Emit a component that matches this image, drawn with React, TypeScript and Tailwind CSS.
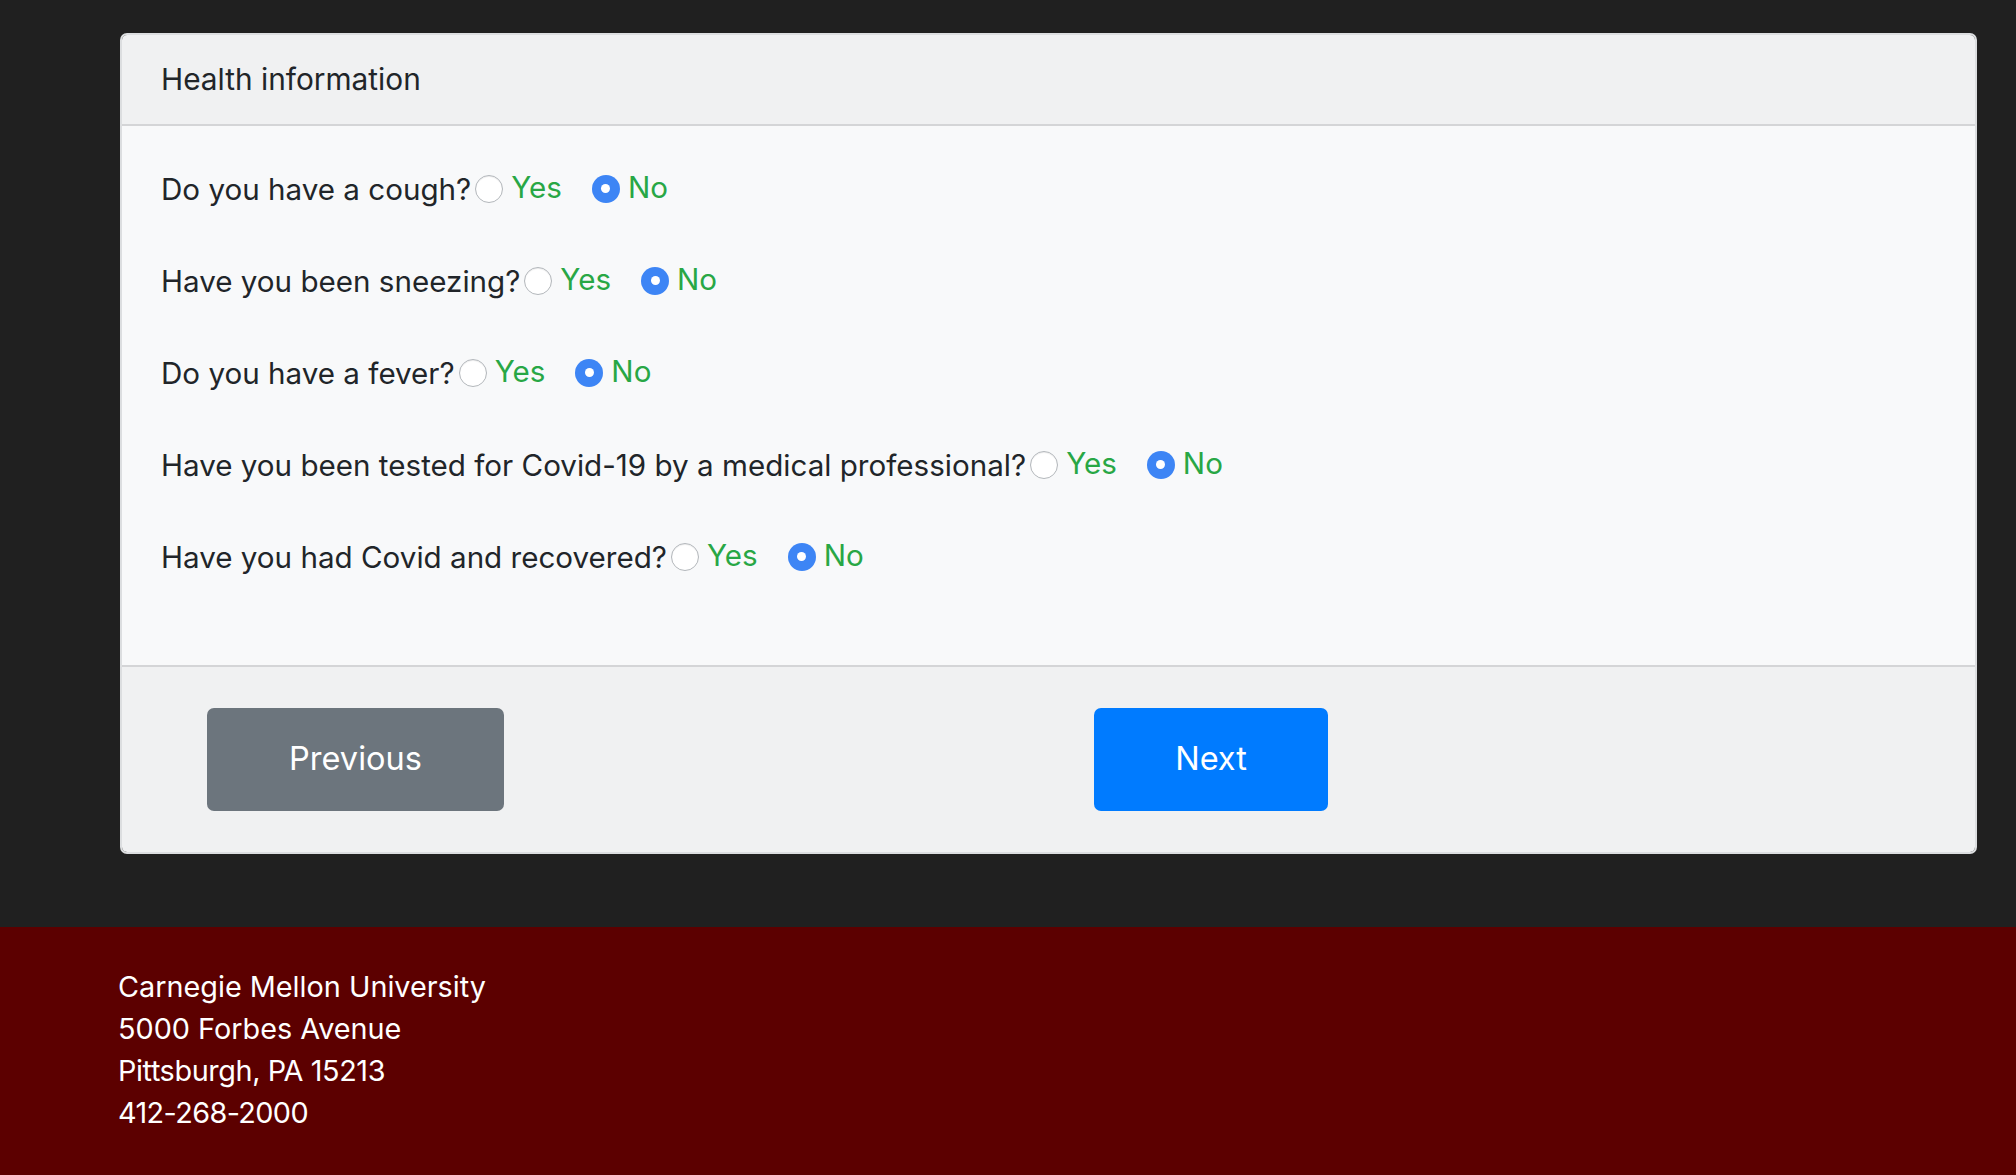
import React from "react";

const questions = [
  "Do you have a cough?",
  "Have you been sneezing?",
  "Do you have a fever?",
  "Have you been tested for Covid-19 by a medical professional?",
  "Have you had Covid and recovered?",
];

function Radio({ checked }: { checked: boolean }) {
  if (checked) {
    return (
      <span className="w-[28px] h-[28px] rounded-full bg-[#3d85f5] flex items-center justify-center shrink-0">
        <span className="w-[9px] h-[9px] rounded-full bg-white" />
      </span>
    );
  }
  return (
    <span className="w-[28px] h-[28px] rounded-full bg-white border-[1.5px] border-[#b3b7bb] shadow-[inset_0_1px_1px_rgba(0,0,0,0.08)] shrink-0" />
  );
}

export default function App() {
  return (
    <div
      className="min-h-screen flex flex-col bg-[#202020] text-[28.8px]"
      style={{ fontFamily: "Inter, 'Noto Sans', sans-serif" }}
    >
      <div className="pl-[120px] pr-[39px] pt-[33px] pb-[73px]">
        <div className="rounded-[7px] border-2 border-[#dcdee0] overflow-hidden">
          <div className="h-[91px] bg-[#f0f1f2] border-b-2 border-[#d4d5d7] flex items-center pl-[39px] text-[#212529] text-[29.8px]">
            Health information
          </div>
          <div className="h-[539px] bg-[#f8f9fa] pt-[17px] pl-[39px] text-[#212529] text-[29.6px]">
            {questions.map((q) => (
              <div key={q} className="h-[92px] flex items-center">
                <span>{q}</span>
                <span className="ml-[4px] flex items-center">
                  <Radio checked={false} />
                  <span className="ml-[8px] text-[#28a745] -mt-[3px]">Yes</span>
                </span>
                <span className="ml-[30px] flex items-center">
                  <Radio checked={true} />
                  <span className="ml-[8px] text-[#28a745] -mt-[3px]">No</span>
                </span>
              </div>
            ))}
          </div>
          <div className="h-[187px] bg-[#f0f1f2] border-t-2 border-[#d4d5d7] flex items-center pl-[85px]">
            <button className="w-[297px] h-[103px] rounded-[7px] bg-[#6c757d] text-white text-[32.5px]">
              Previous
            </button>
            <button className="ml-[590px] w-[234px] h-[103px] rounded-[7px] bg-[#007bff] text-white text-[32.5px]">
              Next
            </button>
          </div>
        </div>
      </div>
      <footer className="flex-1 bg-[#5c0000] text-white pt-[39px] pl-[118px] leading-[42px]">
        <div>Carnegie Mellon University</div>
        <div>5000 Forbes Avenue</div>
        <div className="tracking-[-0.4px]">Pittsburgh, PA 15213</div>
        <div className="tracking-[-0.6px]">412-268-2000</div>
      </footer>
    </div>
  );
}
